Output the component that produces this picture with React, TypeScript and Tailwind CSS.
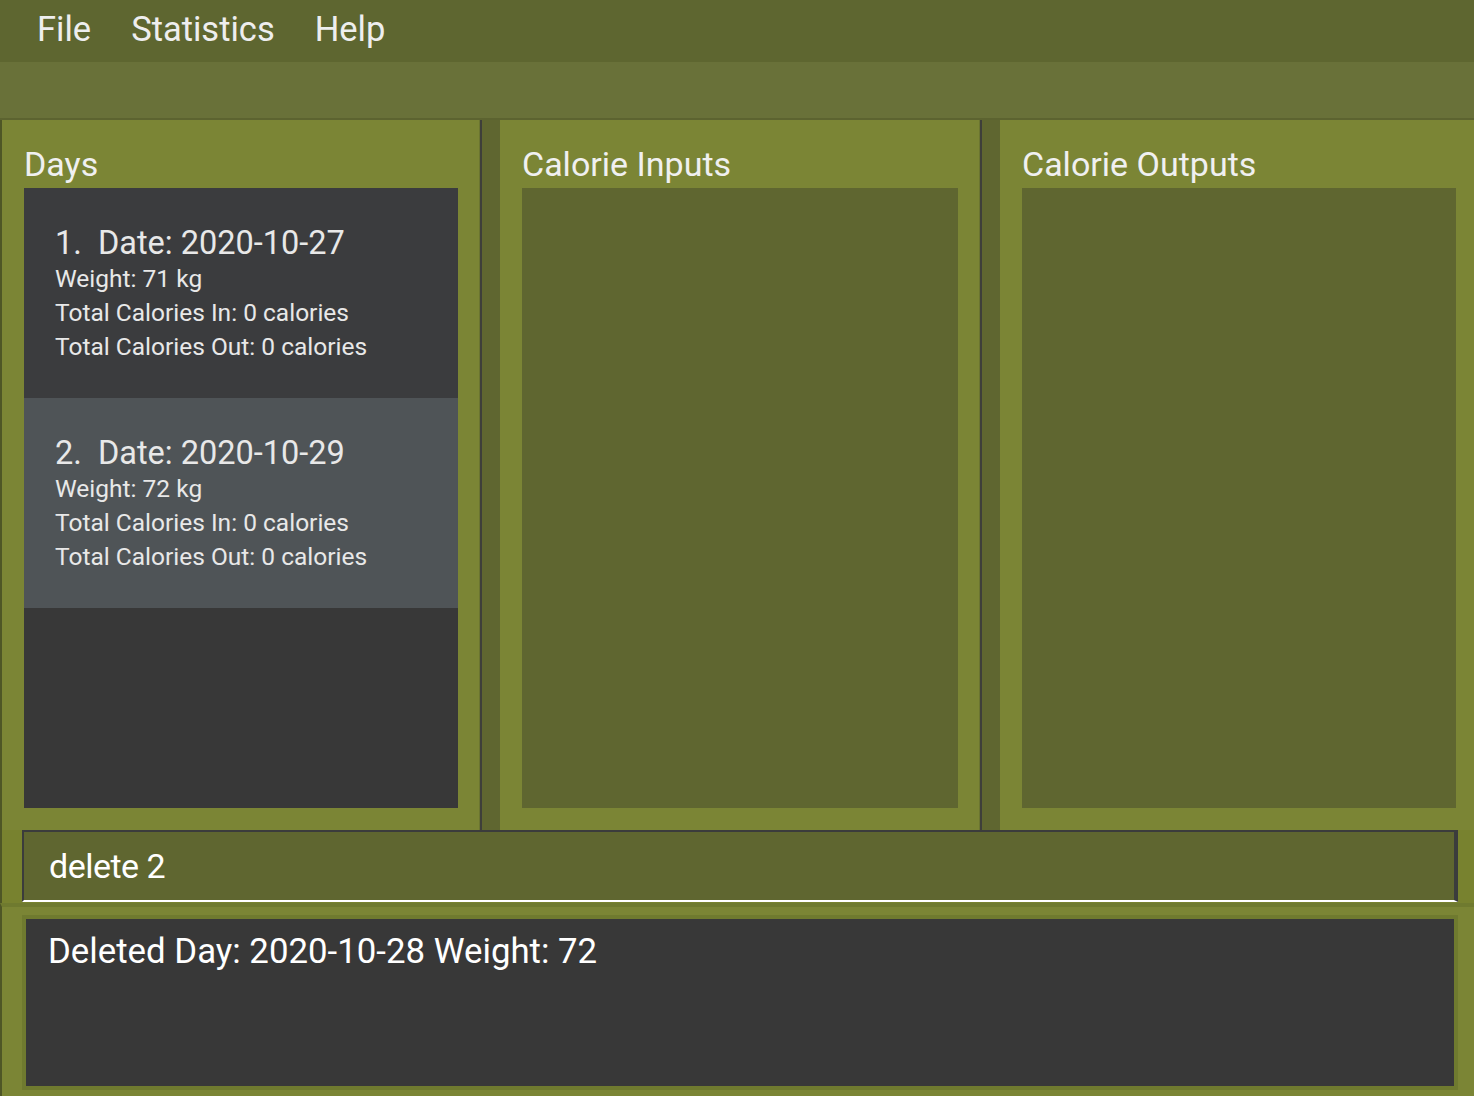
import React from 'react';

type Day = {
  index: number;
  date: string;
  weight: number;
  caloriesIn: number;
  caloriesOut: number;
};

const DAYS: Day[] = [
  { index: 1, date: '2020-10-27', weight: 71, caloriesIn: 0, caloriesOut: 0 },
  { index: 2, date: '2020-10-29', weight: 72, caloriesIn: 0, caloriesOut: 0 },
];

const font = { fontFamily: 'Roboto, "Noto Sans", sans-serif' };

const DayCard: React.FC<{ day: Day; selected: boolean }> = ({ day, selected }) => (
  <div
    className={`h-[210px] pl-[31px] pt-[36px] text-[#e8e8e8] ${
      selected ? 'bg-[#4f5457]' : 'bg-[#3b3c3e]'
    }`}
  >
    <div className="text-[32.5px] leading-[38px]">
      {day.index}.&nbsp; Date: {day.date}
    </div>
    <div className="text-[24.5px] leading-[34px]">Weight: {day.weight} kg</div>
    <div className="text-[24.5px] leading-[34px]">Total Calories In: {day.caloriesIn} calories</div>
    <div className="text-[24.5px] leading-[34px]">Total Calories Out: {day.caloriesOut} calories</div>
  </div>
);

const Panel: React.FC<{ title: string; className?: string; children?: React.ReactNode }> = ({
  title,
  className,
  children,
}) => (
  <div className={`shrink-0 flex flex-col bg-[#7b8535] pl-[22px] pb-[22px] ${className ?? ''}`}>
    <div className="h-[68px] pt-[24px] text-[34px] leading-[40px] text-[#f0f0f0]">{title}</div>
    <div className="flex-1">{children}</div>
  </div>
);

const App: React.FC = () => {
  return (
    <div className="w-[1474px] h-[1096px] overflow-hidden flex flex-col bg-[#7b8535]" style={font}>
      {/* Menu bar */}
      <div className="h-[62px] bg-[#5e6630] flex items-center gap-[40px] pl-[37px] pb-[3px] text-[34.5px] text-[#eeeeee]">
        <span>File</span>
        <span>Statistics</span>
        <span>Help</span>
      </div>
      <div className="h-[58px] bg-[#697139] border-b-[2px] border-[#5c6330]" />

      {/* Main lists */}
      <div className="h-[710px] flex bg-[#5f6630] border-l-[2px] border-[#4e5626]">
        <Panel title="Days" className="w-[478px] border-r border-[#6a7430]">
          <div className="h-full w-[434px] bg-[#383838] flex flex-col">
            {DAYS.map((d, i) => (
              <DayCard key={d.index} day={d} selected={i === 1} />
            ))}
          </div>
        </Panel>
        <div className="w-[2px] shrink-0 bg-[#3e3f3a]" />
        <div className="w-[18px] shrink-0" />
        <Panel title="Calorie Inputs" className="w-[480px] border-r border-[#6a7430]">
          <div className="h-full w-[436px] bg-[#5f6630]" />
        </Panel>
        <div className="w-[2px] shrink-0 bg-[#3e3f3a]" />
        <div className="w-[18px] shrink-0" />
        <Panel title="Calorie Outputs" className="flex-1">
          <div className="h-full w-[434px] bg-[#5f6630]" />
        </Panel>
      </div>

      {/* Command box */}
      <div className="h-[73px] border-l-[2px] border-[#4e5626] pl-[20px] bg-[#78822f]">
        <div className="w-[1436px] h-[72px] bg-[#5f6630] border-t-[2px] border-l-[2px] border-r-[4px] border-b-[2px] border-t-[#3b3c3c] border-l-[#3b3c3c] border-r-[#3b3c3c] border-b-[#ffffff] pl-[25px] flex items-center text-[34px] tracking-[-0.5px] text-white">
          delete 2
        </div>
      </div>

      {/* Result display */}
      <div className="flex-1 border-l-[2px] border-t-[4px] border-[#6f7a2f] border-l-[#4e5626] pl-[20px] pt-[8px] pb-[6px] bg-[#7b8535]">
        <div className="w-[1436px] h-full border-[4px] border-[#6f7a2f]">
          <div className="h-full bg-[#383838] pl-[22px] pt-[10px] text-[34.8px] leading-[44px] text-white">
            Deleted Day: 2020-10-28 Weight: 72
          </div>
        </div>
      </div>
    </div>
  );
};

export default App;
